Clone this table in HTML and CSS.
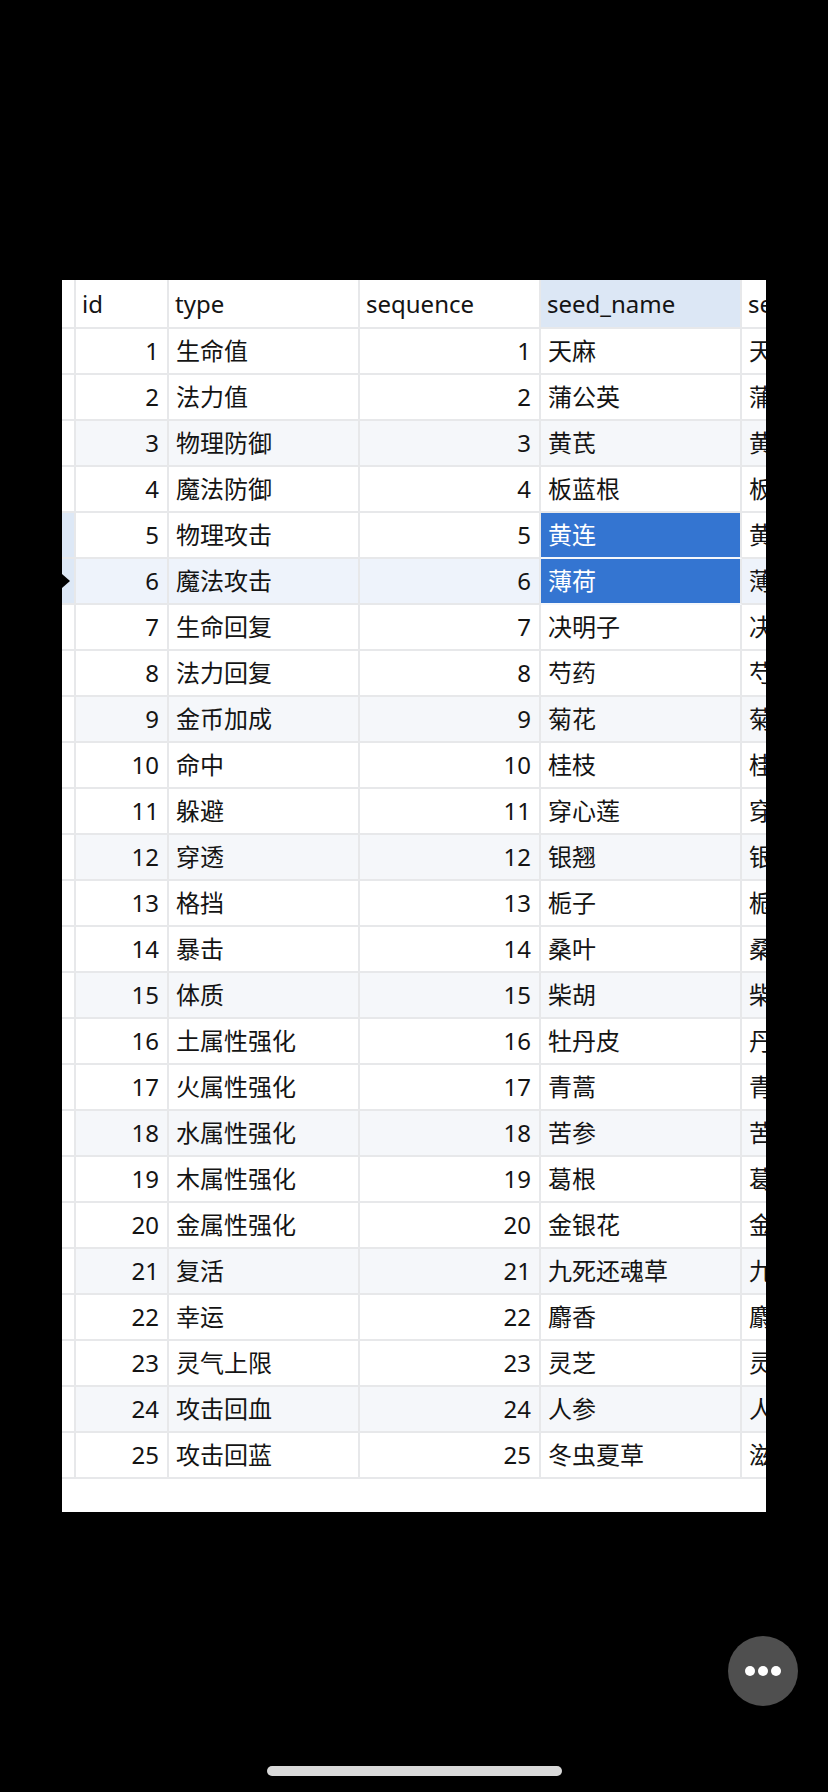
FILE: index.html
```html
<!DOCTYPE html>
<html lang="zh-CN">
<head>
<meta charset="utf-8">
<title>seed table</title>
<link rel="stylesheet" href="styles.css">
</head>
<body>
<div class="screen">
  <div class="sheet">
    <div class="grid">
      <div class="row head">
        <div class="cell ind"></div>
        <div class="cell">id</div>
        <div class="cell">type</div>
        <div class="cell">sequence</div>
        <div class="cell col-active">seed_name</div>
        <div class="cell">seed_alias</div>
      </div>
      <div class="row"><div class="cell ind"></div><div class="cell num">1</div><div class="cell">生命值</div><div class="cell num">1</div><div class="cell">天麻</div><div class="cell">天麻</div></div>
      <div class="row"><div class="cell ind"></div><div class="cell num">2</div><div class="cell">法力值</div><div class="cell num">2</div><div class="cell">蒲公英</div><div class="cell">蒲公英</div></div>
      <div class="row tint"><div class="cell ind"></div><div class="cell num">3</div><div class="cell">物理防御</div><div class="cell num">3</div><div class="cell">黄芪</div><div class="cell">黄芪</div></div>
      <div class="row"><div class="cell ind"></div><div class="cell num">4</div><div class="cell">魔法防御</div><div class="cell num">4</div><div class="cell">板蓝根</div><div class="cell">板蓝根</div></div>
      <div class="row"><div class="cell ind sel"></div><div class="cell num">5</div><div class="cell">物理攻击</div><div class="cell num">5</div><div class="cell picked">黄连</div><div class="cell">黄连</div></div>
      <div class="row current"><div class="cell ind sel cursor"></div><div class="cell num">6</div><div class="cell">魔法攻击</div><div class="cell num">6</div><div class="cell picked">薄荷</div><div class="cell">薄荷</div></div>
      <div class="row"><div class="cell ind"></div><div class="cell num">7</div><div class="cell">生命回复</div><div class="cell num">7</div><div class="cell">决明子</div><div class="cell">决明子</div></div>
      <div class="row"><div class="cell ind"></div><div class="cell num">8</div><div class="cell">法力回复</div><div class="cell num">8</div><div class="cell">芍药</div><div class="cell">芍药</div></div>
      <div class="row tint"><div class="cell ind"></div><div class="cell num">9</div><div class="cell">金币加成</div><div class="cell num">9</div><div class="cell">菊花</div><div class="cell">菊花</div></div>
      <div class="row"><div class="cell ind"></div><div class="cell num">10</div><div class="cell">命中</div><div class="cell num">10</div><div class="cell">桂枝</div><div class="cell">桂枝</div></div>
      <div class="row"><div class="cell ind"></div><div class="cell num">11</div><div class="cell">躲避</div><div class="cell num">11</div><div class="cell">穿心莲</div><div class="cell">穿心莲</div></div>
      <div class="row tint"><div class="cell ind"></div><div class="cell num">12</div><div class="cell">穿透</div><div class="cell num">12</div><div class="cell">银翘</div><div class="cell">银翘</div></div>
      <div class="row"><div class="cell ind"></div><div class="cell num">13</div><div class="cell">格挡</div><div class="cell num">13</div><div class="cell">栀子</div><div class="cell">栀子</div></div>
      <div class="row"><div class="cell ind"></div><div class="cell num">14</div><div class="cell">暴击</div><div class="cell num">14</div><div class="cell">桑叶</div><div class="cell">桑叶</div></div>
      <div class="row tint"><div class="cell ind"></div><div class="cell num">15</div><div class="cell">体质</div><div class="cell num">15</div><div class="cell">柴胡</div><div class="cell">柴胡</div></div>
      <div class="row"><div class="cell ind"></div><div class="cell num">16</div><div class="cell">土属性强化</div><div class="cell num">16</div><div class="cell">牡丹皮</div><div class="cell">丹皮</div></div>
      <div class="row"><div class="cell ind"></div><div class="cell num">17</div><div class="cell">火属性强化</div><div class="cell num">17</div><div class="cell">青蒿</div><div class="cell">青蒿</div></div>
      <div class="row tint"><div class="cell ind"></div><div class="cell num">18</div><div class="cell">水属性强化</div><div class="cell num">18</div><div class="cell">苦参</div><div class="cell">苦参</div></div>
      <div class="row"><div class="cell ind"></div><div class="cell num">19</div><div class="cell">木属性强化</div><div class="cell num">19</div><div class="cell">葛根</div><div class="cell">葛根</div></div>
      <div class="row"><div class="cell ind"></div><div class="cell num">20</div><div class="cell">金属性强化</div><div class="cell num">20</div><div class="cell">金银花</div><div class="cell">金银花</div></div>
      <div class="row tint"><div class="cell ind"></div><div class="cell num">21</div><div class="cell">复活</div><div class="cell num">21</div><div class="cell">九死还魂草</div><div class="cell">九死还魂草</div></div>
      <div class="row"><div class="cell ind"></div><div class="cell num">22</div><div class="cell">幸运</div><div class="cell num">22</div><div class="cell">麝香</div><div class="cell">麝香</div></div>
      <div class="row"><div class="cell ind"></div><div class="cell num">23</div><div class="cell">灵气上限</div><div class="cell num">23</div><div class="cell">灵芝</div><div class="cell">灵芝</div></div>
      <div class="row tint"><div class="cell ind"></div><div class="cell num">24</div><div class="cell">攻击回血</div><div class="cell num">24</div><div class="cell">人参</div><div class="cell">人参</div></div>
      <div class="row"><div class="cell ind"></div><div class="cell num">25</div><div class="cell">攻击回蓝</div><div class="cell num">25</div><div class="cell">冬虫夏草</div><div class="cell">滋补</div></div>
    </div>
  </div>
  <div class="more" aria-label="更多"><span></span><span></span><span></span></div>
  <div class="home-bar"></div>
</div>
</body>
</html>
```

FILE: styles.css
```css
* {
  box-sizing: border-box;
}

html, body {
  margin: 0;
  padding: 0;
  background: #000;
}

.screen {
  width: 828px;
  height: 1792px;
  display: flex;
  flex-direction: column;
  background: #000;
  overflow: hidden;
}

.sheet {
  margin-top: 280px;
  margin-left: 62px;
  width: 704px;
  height: 1232px;
  background: #fff;
  overflow: hidden;
}

.grid {
  display: flex;
  flex-direction: column;
  width: 880px;
  font-family: "Noto Sans", "Noto Sans CJK SC", sans-serif;
  font-size: 24px;
  color: #141414;
}

.row {
  display: grid;
  grid-template-columns: 14px 93px 191px 181px 201px 200px;
  height: 46px;
}

.row.head {
  height: 49px;
}

.cell {
  display: flex;
  align-items: center;
  padding: 0 6px 0 7px;
  border-right: 2px solid #e7e8ea;
  border-bottom: 2px solid #e7e8ea;
  white-space: nowrap;
  overflow: hidden;
  line-height: 1;
}

.cell.num {
  justify-content: flex-end;
  padding-right: 8px;
}

.cell.ind {
  padding: 0;
  background: #fff;
}

.cell.ind.sel {
  background: #dde8f6;
}

.cell.cursor::before {
  content: "";
  width: 0;
  height: 0;
  border-left: 8px solid #000;
  border-top: 7px solid transparent;
  border-bottom: 7px solid transparent;
}

.head .cell {
  padding-left: 6px;
}

.head .col-active {
  background: #dce7f5;
}

.tint .cell:not(.ind) {
  background: #f5f7fa;
}

.current .cell:not(.ind) {
  background: #eef3fb;
}

.cell.picked {
  background: #3475d1 !important;
  color: #fff;
  border-bottom-color: #f4f7fb;
}

.more {
  align-self: flex-end;
  margin-top: 124px;
  margin-right: 30px;
  width: 70px;
  height: 70px;
  border-radius: 50%;
  background: #4f4f4f;
  display: flex;
  align-items: center;
  justify-content: center;
  gap: 3px;
}

.more span {
  width: 10px;
  height: 10px;
  border-radius: 50%;
  background: #fff;
}

.home-bar {
  align-self: center;
  margin-top: 60px;
  width: 295px;
  height: 10px;
  border-radius: 5px;
  background: #d9d9d9;
}
```
